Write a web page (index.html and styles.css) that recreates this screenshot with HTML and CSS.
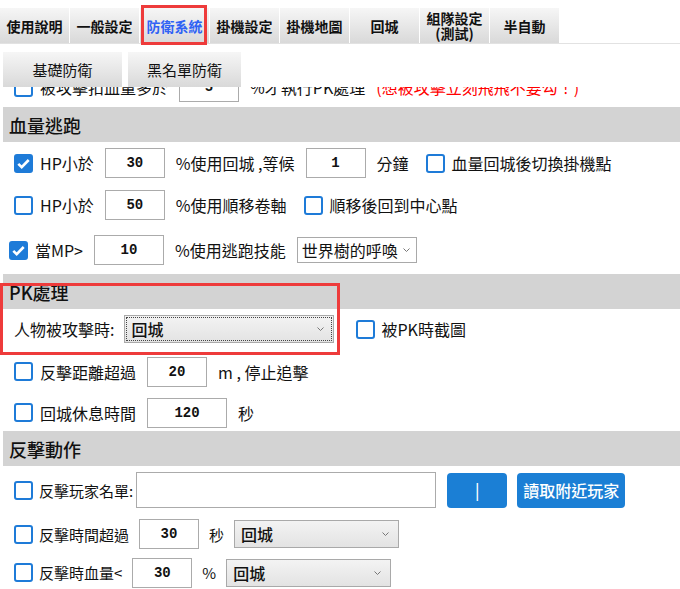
FILE: index.html
```html
<!DOCTYPE html>
<html lang="zh-Hant">
<head>
    <meta charset="UTF-8">
    <meta name="viewport" content="width=device-width, initial-scale=1.0">
    <title>防衛系統</title>
    <link rel="stylesheet" href="styles.css">
</head>
<body>
    <div class="header">
        <div class="tabs">
            <div class="tab">使用說明</div>
            <div class="tab">一般設定</div>
            <div class="tab active">防衛系統</div>
            <div class="tab">掛機設定</div>
            <div class="tab">掛機地圖</div>
            <div class="tab">回城</div>
            <div class="tab two-line">組隊設定<br>(測試)</div>
            <div class="tab">半自動</div>
        </div>
        <div class="subtabs">
            <div class="subtab subtab-basic">基礎防衛</div>
            <div class="subtab subtab-black">黑名單防衛</div>
        </div>
    </div>

    <div class="content">
        <div class="row row--first">
            <span class="cb"></span>
            <span class="label">被攻擊扣血量多於</span>
            <span class="num">5</span>
            <span class="text">%才執行PK處理</span>
            <span class="text warn">(想被攻擊立刻飛飛不要勾！)</span>
        </div>

        <div class="band">血量逃跑</div>
        <div class="row">
            <span class="cb on"><svg viewBox="0 0 19 19"><path d="M4.3 9.8l3.4 3.4 7-7.2"/></svg></span>
            <span class="label">HP小於</span>
            <span class="num">30</span>
            <span class="text">%使用回城 ,等候</span>
            <span class="num">1</span>
            <span class="text">分鐘</span>
            <span class="cb push"></span>
            <span class="label">血量回城後切換掛機點</span>
        </div>
        <div class="row">
            <span class="cb"></span>
            <span class="label">HP小於</span>
            <span class="num">50</span>
            <span class="text">%使用順移卷軸</span>
            <span class="cb push"></span>
            <span class="label">順移後回到中心點</span>
        </div>
        <div class="row row--tall row--mp">
            <span class="cb on"><svg viewBox="0 0 19 19"><path d="M4.3 9.8l3.4 3.4 7-7.2"/></svg></span>
            <span class="label">當MP&gt;</span>
            <span class="num num--wide">10</span>
            <span class="text">%使用逃跑技能</span>
            <div class="select select--plain">
                <span>世界樹的呼喚</span>
                <svg class="chev" viewBox="0 0 7 4"><path d="M0.5 0.5l3 3 3-3"/></svg>
            </div>
        </div>

        <div class="section-pk">
            <div class="band">PK處理</div>
            <div class="row row--snug row--pk">
                <span class="text">人物被攻擊時:</span>
                <div class="select select--focus">
                    <span>回城</span>
                    <svg class="chev" viewBox="0 0 7 4"><path d="M0.5 0.5l3 3 3-3"/></svg>
                </div>
                <span class="cb push-lg"></span>
                <span class="label">被PK時截圖</span>
            </div>
            <div class="marker"></div>
        </div>
        <div class="row row--loose">
            <span class="cb"></span>
            <span class="label">反擊距離超過</span>
            <span class="num">20</span>
            <span class="text">m , 停止追擊</span>
        </div>
        <div class="row row--tight">
            <span class="cb"></span>
            <span class="label">回城休息時間</span>
            <span class="num num--mid">120</span>
            <span class="text">秒</span>
        </div>

        <div class="band">反擊動作</div>
        <div class="row row--tall small">
            <span class="cb"></span>
            <span class="label">反擊玩家名單:</span>
            <span class="field"></span>
            <span class="btn btn--bar">|</span>
            <span class="btn">讀取附近玩家</span>
        </div>
        <div class="row row--snug small">
            <span class="cb"></span>
            <span class="label">反擊時間超過</span>
            <span class="num">30</span>
            <span class="text">秒</span>
            <div class="select select--wide">
                <span>回城</span>
                <svg class="chev" viewBox="0 0 7 4"><path d="M0.5 0.5l3 3 3-3"/></svg>
            </div>
        </div>
        <div class="row row--tight small">
            <span class="cb"></span>
            <span class="label">反擊時血量&lt;</span>
            <span class="num">30</span>
            <span class="text">%</span>
            <div class="select select--wide">
                <span>回城</span>
                <svg class="chev" viewBox="0 0 7 4"><path d="M0.5 0.5l3 3 3-3"/></svg>
            </div>
        </div>
    </div>
</body>
</html>
```

FILE: styles.css
```css
body {
    margin: 0;
    padding-top: 8px;
    font-family: "Noto Sans CJK TC", "Noto Sans", sans-serif;
    font-size: 16px;
    color: #111;
    background-color: #fff;
    height: 581px;
    overflow: hidden;
}

/* top tab strip */
.tabs {
    display: flex;
    gap: 1px;
    border-bottom: 1px solid #e2e2e2;
}
.tab {
    position: relative;
    width: 69px;
    height: 35px;
    display: flex;
    align-items: center;
    justify-content: center;
    text-align: center;
    font-size: 14px;
    font-weight: bold;
    line-height: 16px;
    background: linear-gradient(#f6f6f6, #d9d9d9);
}
.tab.two-line {
    line-height: 15px;
    padding-top: 1px;
    box-sizing: border-box;
}
.tab.active {
    color: #2f62f5;
}
.tab.active::after {
    content: "";
    position: absolute;
    left: 1px;
    right: 2px;
    top: -3px;
    bottom: -2px;
    border: 3px solid #ee3b3b;
}

.subtabs {
    display: flex;
    gap: 6px;
    padding: 8px 0 0 3px;
}
.subtab {
    height: 35px;
    display: flex;
    align-items: center;
    justify-content: center;
    font-size: 15px;
    background: linear-gradient(#f6f6f6, #d9d9d9);
}
.subtab-basic {
    width: 119px;
}
.subtab-black {
    width: 113px;
}

/* scrolled settings area */
.content {
    height: 502px;
    overflow: hidden;
}
.band {
    height: 35px;
    margin-left: 3px;
    padding-left: 6px;
    display: flex;
    align-items: center;
    font-size: 18px;
    font-weight: 500;
    background-color: #d3d3d3;
}

.row {
    height: 42px;
    display: flex;
    align-items: center;
    gap: 11px;
    padding-left: 14px;
    white-space: nowrap;
}
.row--first {
    height: 40px;
    margin-top: -20px;
}
.row--tight {
    height: 37px;
}
.row--snug {
    height: 40px;
}
.row--loose {
    height: 45px;
}
.row--tall {
    height: 48px;
}
.row--mp {
    padding-left: 9px;
}
.row.small {
    gap: 10px;
    font-size: 15px;
}

.cb {
    width: 19px;
    height: 19px;
    box-sizing: border-box;
    border: 2px solid #1e7bd8;
    border-radius: 3px;
    flex: none;
}
.cb + .label {
    margin-left: -4px;
}
.cb.on {
    background-color: #1e7bd8;
    display: flex;
}
.cb.on svg {
    width: 19px;
    height: 19px;
    margin: -2px;
}
.cb.on path {
    fill: none;
    stroke: #fff;
    stroke-width: 2.6;
}
.cb.push {
    margin-left: 6px;
}
.cb.push-lg {
    margin-left: 12px;
}

.num {
    width: 60px;
    height: 30px;
    box-sizing: border-box;
    border: 1px solid #ababab;
    display: flex;
    align-items: center;
    justify-content: center;
    font-family: "Liberation Mono", monospace;
    font-weight: bold;
    font-size: 14px;
}
.num--wide {
    width: 70px;
}
.num--mid {
    width: 80px;
}
.warn {
    color: #f00;
}

.select {
    height: 28px;
    box-sizing: border-box;
    display: flex;
    align-items: center;
    justify-content: space-between;
    padding: 0 9px 0 6px;
    border: 1px solid #a9a9a9;
    background: linear-gradient(#f3f3f3, #e3e3e3);
    font-weight: 500;
    font-size: 16px;
}
.select--plain {
    width: 120px;
    height: 26px;
    padding: 0 6px 0 4px;
    background: #fff;
    font-weight: normal;
}
.select--focus {
    width: 210px;
    outline: 1px dotted #444;
    outline-offset: -3px;
}
.select--wide {
    width: 165px;
}
.chev {
    width: 7px;
    height: 4px;
}
.chev path {
    fill: none;
    stroke: #777;
    stroke-width: 1;
}

.row--pk {
    gap: 10px;
}

/* red frame drawn round the PK block */
.section-pk {
    position: relative;
}
.marker {
    position: absolute;
    left: 0;
    top: 9px;
    width: 340px;
    height: 72px;
    box-sizing: border-box;
    border: 3px solid #ee3b3b;
}

.field {
    width: 300px;
    height: 36px;
    box-sizing: border-box;
    border: 1px solid #ababab;
    margin-left: -7px;
}
.btn {
    height: 35px;
    padding: 0 6px;
    display: flex;
    align-items: center;
    justify-content: center;
    background-color: #1b7fd5;
    color: #fff;
    border-radius: 4px;
    font-size: 16px;
    font-weight: 500;
}
.btn--bar {
    width: 60px;
    padding: 0;
    margin-left: 1px;
}
```
